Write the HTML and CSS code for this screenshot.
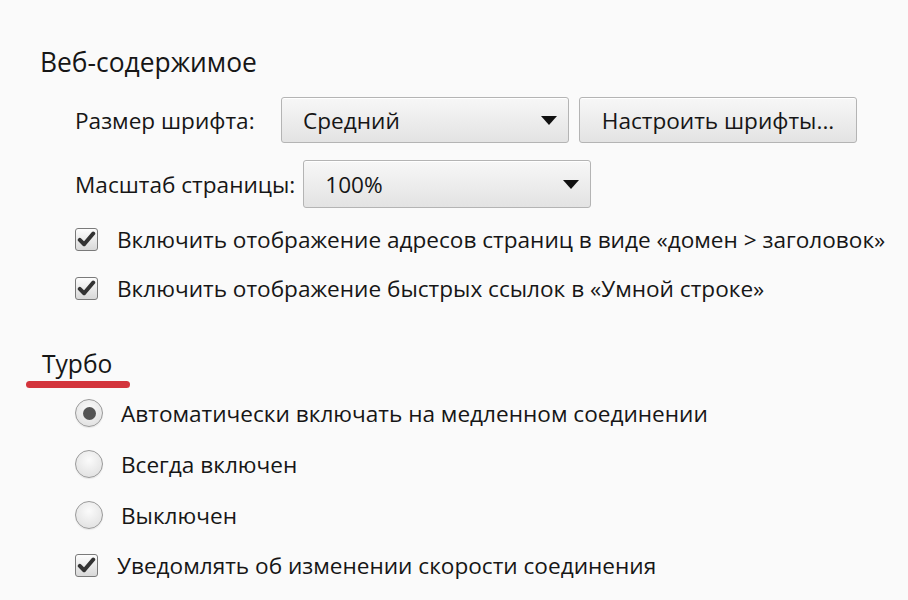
FILE: index.html
```html
<!DOCTYPE html>
<html lang="ru">
<head>
<meta charset="utf-8">
<title>Настройки</title>
<link rel="stylesheet" href="styles.css">
</head>
<body>
<div class="page">
  <h2 class="section-title">Веб-содержимое</h2>
  <div class="rows">
    <div class="field-row first">
      <span class="label">Размер шрифта:</span>
      <div class="select wide">
        <span>Средний</span>
        <span class="arrow"></span>
      </div>
      <div class="button">Настроить шрифты...</div>
    </div>
    <div class="field-row second">
      <span class="label">Масштаб страницы:</span>
      <div class="select wide">
        <span>100%</span>
        <span class="arrow"></span>
      </div>
    </div>
    <div class="check-row c1">
      <span class="checkbox checked"><svg viewBox="0 0 24 24" width="19" height="19"><path d="M3.5 12.5 L9 18 L20.5 4.5" fill="none" stroke="#333" stroke-width="5" stroke-linecap="round" stroke-linejoin="round"/></svg></span>
      <span class="text">Включить отображение адресов страниц в виде «домен &gt; заголовок»</span>
    </div>
    <div class="check-row c2">
      <span class="checkbox checked"><svg viewBox="0 0 24 24" width="19" height="19"><path d="M3.5 12.5 L9 18 L20.5 4.5" fill="none" stroke="#333" stroke-width="5" stroke-linecap="round" stroke-linejoin="round"/></svg></span>
      <span class="text">Включить отображение быстрых ссылок в «Умной строке»</span>
    </div>
  </div>

  <div class="turbo-head">
    <h2 class="section-title turbo">Турбо</h2>
    <div class="red-line"></div>
  </div>
  <div class="rows">
    <div class="radio-row r1">
      <span class="radio selected"><span class="dot"></span></span>
      <span class="text">Автоматически включать на медленном соединении</span>
    </div>
    <div class="radio-row r2">
      <span class="radio"></span>
      <span class="text">Всегда включен</span>
    </div>
    <div class="radio-row r3">
      <span class="radio"></span>
      <span class="text">Выключен</span>
    </div>
    <div class="check-row c3">
      <span class="checkbox checked"><svg viewBox="0 0 24 24" width="19" height="19"><path d="M3.5 12.5 L9 18 L20.5 4.5" fill="none" stroke="#333" stroke-width="5" stroke-linecap="round" stroke-linejoin="round"/></svg></span>
      <span class="text">Уведомлять об изменении скорости соединения</span>
    </div>
  </div>
</div>
</body>
</html>
```

FILE: styles.css
```css
* { box-sizing: border-box; }
html, body {
  margin: 0;
  padding: 0;
  background: #fafafa;
}
body {
  font-family: "Open Sans", "Noto Sans", sans-serif;
  color: #161616;
  width: 908px;
  height: 600px;
  overflow: hidden;
}
.page {
  padding: 46px 0 0 40px;
}
.section-title {
  margin: 0;
  font-weight: 400;
  font-size: 26.4px;
  line-height: 32px;
}
.rows {
  padding-left: 35px;
  font-size: 22.6px;
}
.field-row {
  display: flex;
  align-items: center;
  gap: 8px;
}
.field-row.first { margin-top: 19px; height: 46px; }
.field-row.second { margin-top: 17px; height: 48px; }
.label {
  min-width: 198px;
  white-space: nowrap;
}
.select, .button {
  height: 100%;
  display: flex;
  align-items: center;
  border: 1px solid #b4b4b4;
  border-radius: 3px;
  background: linear-gradient(#f7f7f7, #e3e3e3);
  box-shadow: inset 0 1px 0 #fff;
}
.select {
  width: 288px;
  padding: 0 11px 0 21px;
  justify-content: space-between;
}
.arrow {
  width: 0;
  height: 0;
  border-left: 8px solid transparent;
  border-right: 8px solid transparent;
  border-top: 9px solid #111;
}
.button {
  margin-left: 2px;
  width: 278px;
  justify-content: center;
}
.check-row, .radio-row {
  display: flex;
  align-items: center;
  white-space: nowrap;
}
.check-row { height: 30px; }
.check-row.c1 { margin-top: 16px; }
.check-row.c2 { margin-top: 19px; }
.check-row.c3 { margin-top: 18px; }
.checkbox {
  width: 23px;
  height: 23px;
  flex: none;
  border: 1px solid #7a7a7a;
  border-radius: 3px;
  background: linear-gradient(#fdfdfd, #d8d8d8);
  display: flex;
  align-items: center;
  justify-content: center;
  margin-right: 19px;
}
.turbo-head {
  margin-top: 45px;
}
.section-title.turbo {
  font-size: 24.6px;
  line-height: 32px;
  padding-left: 2px;
}
.red-line {
  margin-left: -14px;
  margin-top: 1px;
  width: 104px;
  height: 7px;
  border-radius: 4px;
  background: #d3343c;
  filter: blur(0.5px);
}
.radio-row { height: 34px; }
.radio-row.r1 { margin-top: 8px; }
.radio-row.r2 { margin-top: 17px; }
.radio-row.r3 { margin-top: 17px; }
.radio {
  width: 28px;
  height: 28px;
  flex: none;
  border-radius: 50%;
  border: 1.5px solid #9a9a9a;
  background: radial-gradient(circle at 50% 35%, #fbfbfb, #dcdcdc);
  box-shadow: 0 1px 1px rgba(0,0,0,0.08);
  margin-right: 18px;
  display: flex;
  align-items: center;
  justify-content: center;
}
.dot {
  width: 13px;
  height: 13px;
  border-radius: 50%;
  background: #555;
}
```
